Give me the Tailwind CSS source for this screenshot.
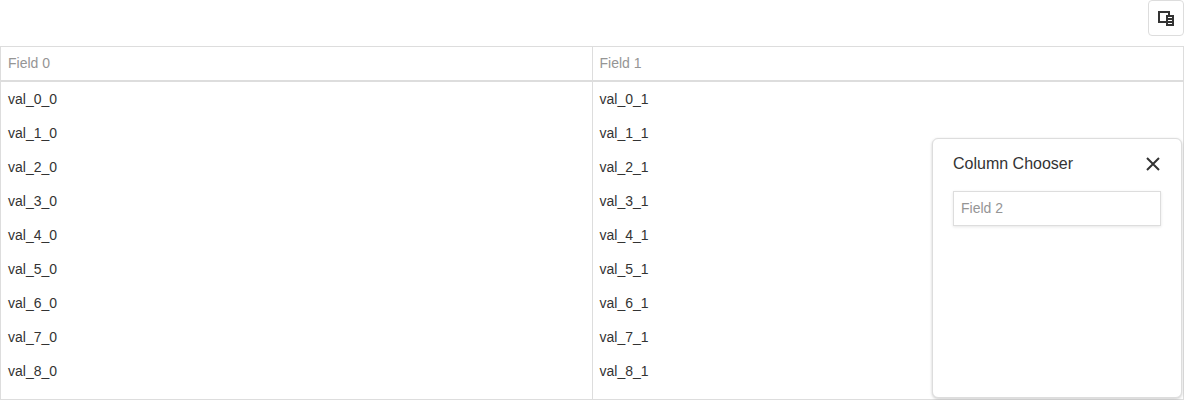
<!DOCTYPE html>
<html lang="en">
<head>
<meta charset="utf-8">
<title>Data grid with column chooser</title>
<script src="https://cdn.jsdelivr.net/npm/@tailwindcss/browser@4"></script>
</head>
<body class="bg-white">
<main class="relative flex h-[400px] w-[1184px] flex-col overflow-hidden font-['Liberation_Sans',Arial,sans-serif] text-sm text-[#333]">
  <div class="mb-2.5 flex justify-end">
    <button aria-label="Column Chooser" class="flex size-9 items-center justify-center rounded border border-[#ddd] bg-white">
      <svg width="18" height="18" viewBox="0 0 18 18" shape-rendering="crispEdges" fill="#333">
        <path fill-rule="evenodd" d="M1 2h12v4h-2V4H3v8h6v2H1z"/>
        <path fill-rule="evenodd" d="M9 6h8v11H9zM11 8v1h4V8zM11 11v1h4v-1zM11 14v1h4v-1z"/>
      </svg>
    </button>
  </div>
  <section class="flex flex-1 flex-col border border-[#ddd]">
    <div class="grid h-[35px] shrink-0 grid-cols-[591px_1fr] border-b-2 border-[#ddd] leading-[33px] text-[#959595]">
      <div class="pl-[7px]">Field 0</div>
      <div class="border-l border-[#ddd] pl-[6.5px]">Field 1</div>
    </div>
    <div class="grid flex-1 grid-cols-[591px_1fr] leading-[34px]">
      <div class="pl-[7px]">
        <div>val_0_0</div><div>val_1_0</div><div>val_2_0</div><div>val_3_0</div><div>val_4_0</div><div>val_5_0</div><div>val_6_0</div><div>val_7_0</div><div>val_8_0</div>
      </div>
      <div class="border-l border-[#ddd] pl-[6.5px]">
        <div>val_0_1</div><div>val_1_1</div><div>val_2_1</div><div>val_3_1</div><div>val_4_1</div><div>val_5_1</div><div>val_6_1</div><div>val_7_1</div><div>val_8_1</div>
      </div>
    </div>
  </section>
  <aside class="absolute right-0.5 bottom-0.5 h-[260px] w-[250px] rounded-md border border-[#ddd] bg-white px-5 shadow-[0_1px_3px_rgba(0,0,0,0.2)]">
    <div class="flex h-[52px] items-center justify-between pb-0.5">
      <h2 class="text-base leading-6">Column Chooser</h2>
      <svg class="mr-px" width="14" height="14" viewBox="0 0 14 14" fill="none" stroke="#333" stroke-width="2"><path d="M1 1l12 12M13 1L1 13"/></svg>
    </div>
    <div class="h-[35px] border border-[#ddd] pl-[7px] leading-[33px] text-[#959595] shadow-[0_1px_3px_rgba(0,0,0,0.1)]">Field 2</div>
  </aside>
</main>
</body>
</html>
